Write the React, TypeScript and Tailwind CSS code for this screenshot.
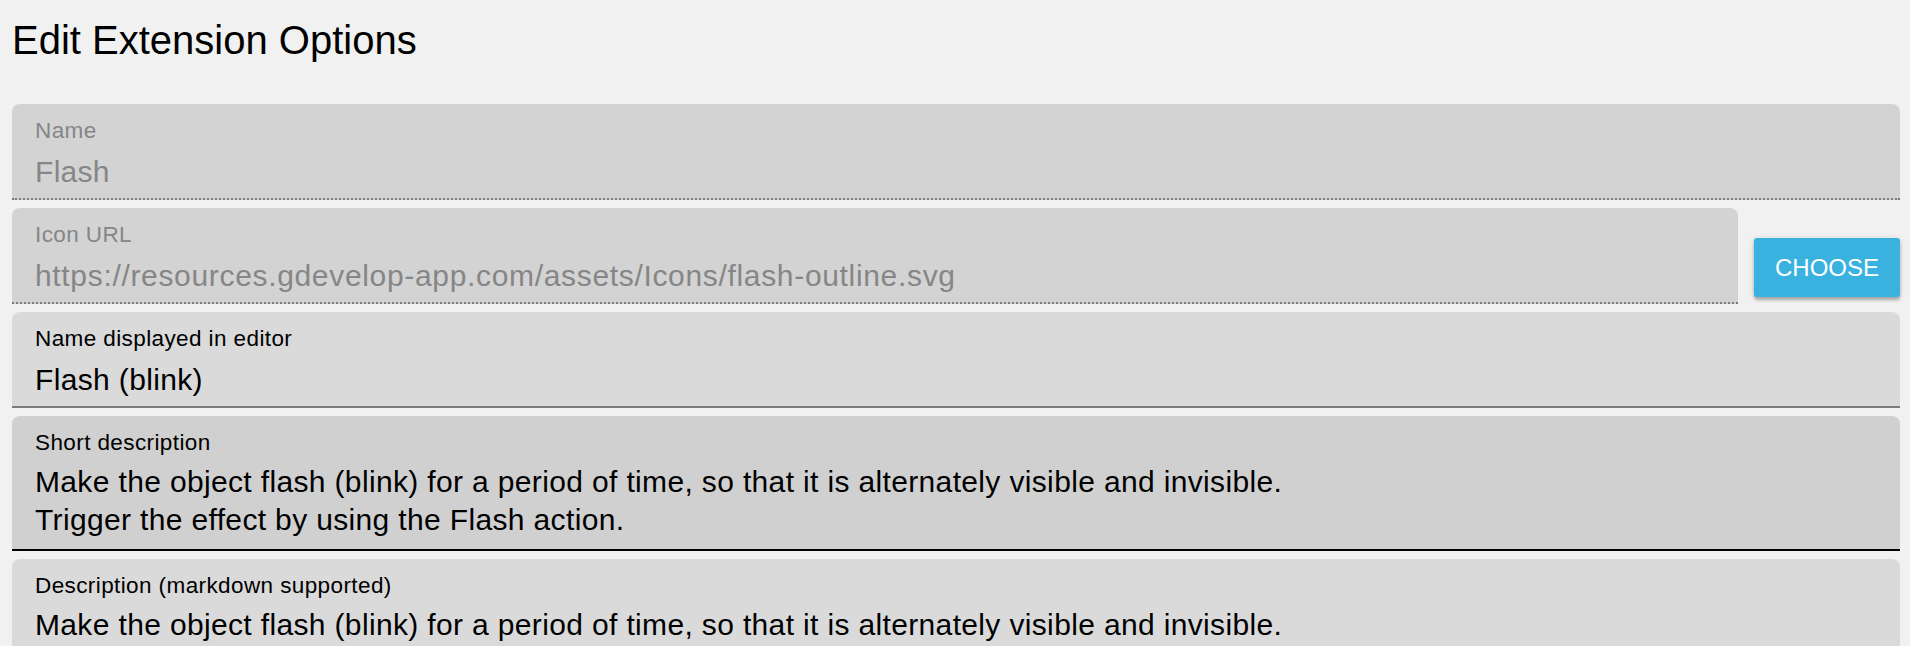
import React from 'react'

const font = { fontFamily: '"Liberation Sans", Arial, sans-serif' }

type FieldProps = {
  label: string
  value: string[]
  disabled?: boolean
  variant?: 'idle' | 'hover'
  wide?: boolean
}

function Field({ label, value, disabled, variant = 'idle', wide }: FieldProps) {
  const bg = disabled ? 'bg-[#d3d3d3]' : variant === 'hover' ? 'bg-[#d0d0d0]' : 'bg-[#dadada]'
  const line = disabled
    ? 'border-b-2 border-dotted border-[#7a7a7a]'
    : variant === 'hover'
      ? 'border-b-2 border-solid border-black'
      : 'border-b-2 border-solid border-[#7d7d7d]'
  const multi = value.length > 1
  // url text runs a bit wider in the original font
  const tracking = wide ? 'tracking-[0.67px]' : disabled ? 'tracking-[0.3px]' : 'tracking-[0.35px]'
  return (
    <div className={`${bg} ${line} rounded-t-[8px] pl-[23px] pr-4 pt-[14px] ${multi ? 'pb-[10px]' : 'pb-[8px]'}`}>
      <div className={`text-[22.5px] leading-[26px] tracking-[0.4px] ${disabled ? 'text-[#868686]' : 'text-black'}`}>{label}</div>
      <div
        className={`${multi ? 'mt-[7px] leading-[38px]' : 'mt-[10px] leading-[36px]'} text-[30px] ${tracking} whitespace-nowrap ${disabled ? 'text-[#868686]' : 'text-black'}`}
      >
        {value.map((v) => (
          <div key={v}>{v}</div>
        ))}
      </div>
    </div>
  )
}

export default function App() {
  return (
    <div className="min-h-screen bg-[#f1f1f1] pl-[12px] pr-[10px] overflow-hidden" style={font}>
      <h1 className="pt-[16px] text-[40px] leading-[48px] font-normal text-black">Edit Extension Options</h1>

      <div className="mt-[40px] flex flex-col gap-[8px]">
        <Field label="Name" value={['Flash']} disabled />

        <div className="flex gap-[16px]">
          <div className="flex-1">
            <Field
              label="Icon URL"
              value={['https://resources.gdevelop-app.com/assets/Icons/flash-outline.svg']}
              disabled
              wide
            />
          </div>
          <button className="self-end mb-[7px] w-[146px] h-[59px] bg-[#3ab2e0] text-white text-[24px] rounded-[3px] shadow-[0_3px_3px_rgba(0,0,0,0.25),0_1px_6px_rgba(0,0,0,0.12)]">
            CHOOSE
          </button>
        </div>

        <Field label="Name displayed in editor" value={['Flash (blink)']} />

        <Field
          label="Short description"
          variant="hover"
          value={[
            'Make the object flash (blink) for a period of time, so that it is alternately visible and invisible.',
            'Trigger the effect by using the Flash action.',
          ]}
        />

        <Field
          label="Description (markdown supported)"
          value={[
            'Make the object flash (blink) for a period of time, so that it is alternately visible and invisible.',
            'Trigger the effect by using the Flash action.',
          ]}
        />
      </div>
    </div>
  )
}
